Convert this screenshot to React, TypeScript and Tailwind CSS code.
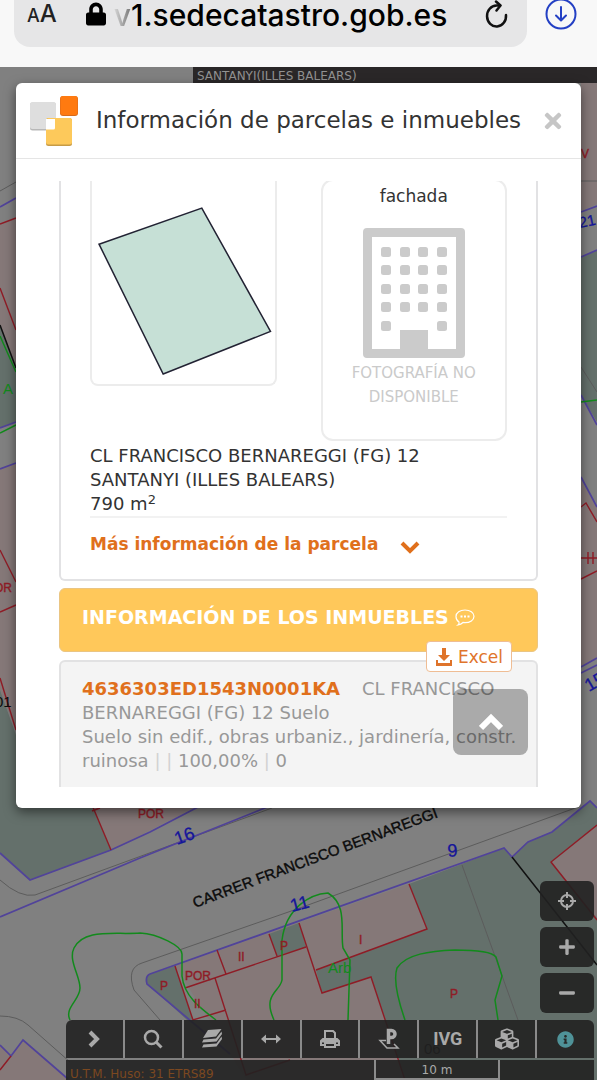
import type { ReactNode } from 'react';
import { FaCubes, FaInfoCircle, FaLock, FaMinus, FaPlus, FaTimes } from 'react-icons/fa';

const PINK = '#857878';
const GREEN = '#64706b';
const RED = '#8f1c26';
const VIOLET = '#51439a';
const LIME = '#128a1c';
const GREY = '#5c5c5c';

export default function App() {
  return (
    <div className="flex min-h-screen flex-col overflow-hidden bg-[#808080] font-['DejaVu_Sans','Verdana',sans-serif] text-[#333]">
      <BrowserBar />

      <main className="relative flex flex-1 flex-col overflow-hidden">
        <CadastralMap />
        <div className="relative ml-[193px] h-4 bg-[#2a2728] px-1 text-xs leading-[18px] text-[#929292]">
          SANTANYI(ILLES BALEARS)
        </div>
        <ParcelDialog />
        <MapControls />
      </main>
    </div>
  );
}

function BrowserBar() {
  return (
    <header className="flex h-[67px] items-start bg-[#f8f8f8] pr-5 pl-[14px] font-['Inter','Liberation_Sans',sans-serif] text-black">
      <div className="flex h-[47px] flex-1 items-start rounded-b-2xl bg-[#e6e6e7] pr-[18px] pl-[13px]">
        <button aria-label="Tamaño del texto" className="flex h-7 items-baseline font-medium text-[#222]">
          <span className="text-[18px] leading-7">A</span>
          <span className="text-[24px] leading-7">A</span>
        </button>
        <FaLock className="mt-px ml-[29px] h-[26px] w-5" />
        <span className="ml-2 flex-1 text-[30px] leading-[30px] font-medium whitespace-nowrap">
          <span className="bg-linear-to-r from-[#d8d8d8] to-[#777] bg-clip-text text-transparent">v</span>1.sedecatastro.gob.es
        </span>
        <button aria-label="Recargar">
          <svg viewBox="0 0 24 30" className="h-[30px] w-6" fill="none" stroke="#111" strokeWidth="2.500" strokeLinecap="round" strokeLinejoin="round">
            <path d="M21 15a9.500 10.500 0 1 1-9.500-9.500H15" />
            <path d="M11 1.500 15.500 5.500 11.500 10.500" />
          </svg>
        </button>
      </div>
      <button aria-label="Descargas" className="ml-[18px]">
        <svg viewBox="0 0 32 30" className="h-[30px] w-8" fill="none" stroke="#2440c4" strokeWidth="2" strokeLinecap="round" strokeLinejoin="round">
          <circle cx="16" cy="14" r="14.500" />
          <path d="M16 7v13M11 15.500l5 5 5-5" />
        </svg>
      </button>
    </header>
  );
}

function ParcelDialog() {
  return (
    <section role="dialog" aria-labelledby="dialog-title" className="relative mx-4 rounded-md bg-white pb-[21px] shadow-[0_4px_12px_rgba(0,0,0,0.5)]">
      <div className="flex h-[76px] items-center border-b border-[#e5e5e5] pr-4 pl-[14px]">
        <Logo />
        <h1 id="dialog-title" className="ml-4 flex-1 text-[23px] whitespace-nowrap">
          Información de parcelas e inmuebles
        </h1>
        <button aria-label="Cerrar" className="text-[#c6c6c6]">
          <FaTimes className="size-6" />
        </button>
      </div>

      {/* Scrolled content */}
      <div className="mx-[43px] mt-[22px] overflow-hidden text-lg leading-6">
        <div className="rounded-b-md border-2 border-t-0 border-[#e2e2e4] px-[29px] pb-[23px]">
          <div className="grid grid-cols-2 items-start gap-11">
            <div className="rounded-b-lg border-2 border-t-0 border-[#ececec]">
              <svg viewBox="0 0 182 202" className="w-full">
                <path d="M7 63 109.500 27 178 150 71 192.500Z" fill="#c6e0d6" stroke="#223" strokeWidth="1.500" />
              </svg>
            </div>
            <div className="-mt-[2px] flex flex-col items-center rounded-xl border-2 border-[#ececec] pb-[30px] text-center">
              <p className="mt-[3px] text-[17px] leading-6">fachada</p>
              <BuildingPicture />
              <p className="mt-[3px] text-[15px] leading-6 text-[#cacaca]">
                FOTOGRAFÍA NO
                <br />
                DISPONIBLE
              </p>
            </div>
          </div>

          <p className="mt-[3px] border-b-2 border-[#f2f2f2]">
            CL FRANCISCO BERNAREGGI (FG) 12
            <br />
            SANTANYI (ILLES BALEARS)
            <br />
            790 m<sup className="text-[13px]">2</sup>
          </p>
          <button className="mt-[14px] flex items-center gap-[22px] text-[17px] font-bold text-[#e0701c]">
            Más información de la parcela
            <svg viewBox="0 0 20 14" className="mt-2 h-[14px] w-5" fill="none" stroke="currentColor" strokeWidth="4">
              <path d="m2 2 8 8 8-8" />
            </svg>
          </button>
        </div>

        <div className="relative mt-[7px] h-16 rounded-md border border-[#eac583] bg-[#ffc85a] px-[22px] pt-4">
          <h2 className="flex items-center gap-[6px] text-[19px] font-bold whitespace-nowrap text-white">
            INFORMACIÓN DE LOS INMUEBLES
            <svg viewBox="0 0 20 18" className="h-[18px] w-5" fill="none" stroke="white" strokeWidth="1.200">
              <path d="M4 14C1.500 12.500 1 10.500 1 8.500 1 4.500 5 2 10 2s9 2.500 9 6.300-4 6.400-9 6.400l-2-.2C6.500 16 5 16.700 3 17c1-.8 1.300-1.800 1-3Z" />
              <path d="M5.500 8.500h2M9 8.500h2M12.500 8.500h2" strokeWidth="2" />
            </svg>
          </h2>
          <button className="absolute top-[52px] right-[25px] z-10 flex h-[31px] items-center gap-[5px] rounded border border-[#efbd94] bg-white px-2 text-[17px] text-[#df742b]">
            <svg viewBox="0 0 18 20" className="h-5 w-[18px]" fill="currentColor">
              <path d="M7 1h4v7h4l-6 6-6-6h4ZM1 13h2v3h12v-3h2v6H1Z" />
            </svg>
            Excel
          </button>
        </div>

        <div className="mt-2 rounded-t-md border-2 border-b-0 border-[#e2e2e3] bg-[#f4f4f4] px-[21px] pt-[15px] pb-[14px] text-[#989898]">
          <p>
            <a href="#inmueble" className="mr-[22px] font-bold text-[#e0701c]">4636303ED1543N0001KA</a>
            CL FRANCISCO BERNAREGGI (FG) 12 Suelo
            <br />
            <span className="whitespace-nowrap">Suelo sin edif., obras urbaniz., jardinería, constr.</span>
            <br />
            ruinosa <i className="text-[#d2d2d2] not-italic">| |</i> 100,00% <i className="text-[#d2d2d2] not-italic">|</i> 0
          </p>
        </div>
      </div>

      <button aria-label="Volver arriba" className="absolute right-[53px] bottom-[53px] flex h-[66px] w-[75px] items-center justify-center rounded-lg bg-black/30 text-white">
        <svg viewBox="0 0 24 18" className="h-[18px] w-6" fill="none" stroke="currentColor" strokeWidth="6">
          <path d="M2 15 12 5l10 10" />
        </svg>
      </button>
    </section>
  );
}

function Logo() {
  return (
    <svg viewBox="0 0 50 52" className="h-[52px] w-[50px]">
      <rect x="0" y="7.500" width="26" height="28" rx="2.500" fill="#b8b8b8" />
      <rect x="0" y="7" width="26" height="27" rx="2.500" fill="#dedede" />
      <rect x="30" y="1" width="18" height="20" rx="3" fill="#d66b1c" />
      <rect x="30.500" y="1" width="17" height="19" rx="2.500" fill="#ff7a10" />
      <rect x="16" y="23" width="26" height="28" rx="2.500" fill="#c79b45" />
      <rect x="16" y="23" width="26" height="26.500" rx="2.500" fill="#fdc95b" />
      <path d="M16 24h9v9a1.500 1.500 0 0 1-1.500 1.500H16Z" fill="#fff" />
    </svg>
  );
}

function BuildingPicture() {
  const columns = [18, 37, 55, 74];
  const rows = [19, 37, 56, 74, 93];
  return (
    <svg viewBox="0 0 102 130" className="mt-5 h-[130px] w-[102px]" fill="#cbcbcb">
      <path fillRule="evenodd" d="M4 0h94a4 4 0 0 1 4 4v122a4 4 0 0 1-4 4H4a4 4 0 0 1-4-4V4a4 4 0 0 1 4-4ZM9 9v112h28v-19h28v19h28V9Z" />
      {rows.map((y, row) =>
        columns
          .filter((_, col) => row < 4 || col === 0 || col === 3)
          .map(x => <rect key={`${x}-${y}`} x={x} y={y} width="10" height="10" rx="2.500" />),
      )}
    </svg>
  );
}

function ToolButton({ label, children }: { label: string; children: ReactNode }) {
  return (
    <button aria-label={label} className="flex flex-1 items-center justify-center border-r-2 border-[#8a8a8a] last:border-r-0">
      {children}
    </button>
  );
}

function ZoomButton({ label, children }: { label: string; children: ReactNode }) {
  return (
    <button aria-label={label} className="flex h-10 w-[54px] items-center justify-center rounded-md bg-[#212121]/90">
      {children}
    </button>
  );
}

function MapControls() {
  return (
    <div className="relative mt-auto mr-[3px] ml-[66px] flex flex-col text-[#a9a9a9]">
      <div className="mb-[7px] flex flex-col items-end gap-[6px]">
        <ZoomButton label="Mi posición">
          <svg viewBox="0 0 18 18" className="size-[18px]" fill="none" stroke="currentColor" strokeWidth="2">
            <circle cx="9" cy="9" r="6" />
            <path d="M9 0v6M9 12v6M0 9h6M12 9h6" />
          </svg>
        </ZoomButton>
        <ZoomButton label="Acercar"><FaPlus className="size-[18px]" /></ZoomButton>
        <ZoomButton label="Alejar"><FaMinus className="size-[18px]" /></ZoomButton>
      </div>

      <div className="flex h-[38px] rounded-t-md bg-[#212121]/90">
        <ToolButton label="Desplegar">
          <svg viewBox="0 0 12 18" className="h-[18px] w-3" fill="none" stroke="currentColor" strokeWidth="4">
            <path d="m2 2 7 7-7 7" />
          </svg>
        </ToolButton>
        <ToolButton label="Buscar">
          <svg viewBox="0 0 20 20" className="size-5" fill="none" stroke="currentColor">
            <circle cx="8.500" cy="8.500" r="6.500" strokeWidth="2.500" />
            <path d="m13 13 5.500 5.500" strokeWidth="3" />
          </svg>
        </ToolButton>
        <ToolButton label="Capas">
          <svg viewBox="0 0 22 22" className="size-[22px]" fill="currentColor">
            <path d="M7 2 20.500 1 15 8.500 2 10Z" />
            <path d="m2.500 11.500 12.500-1 5.500-7 .5 2.500-5.500 7.500L1 14.500Z" />
            <path d="m2.500 16.500 13-1 5-7 .5 2.500-5.500 7.500L1 19.500Z" />
          </svg>
        </ToolButton>
        <ToolButton label="Medir">
          <svg viewBox="0 0 20 10" className="h-[10px] w-5" fill="currentColor">
            <path d="M0 5 5 .5V4h10V.5L20 5l-5 4.500V6H5v3.500Z" />
          </svg>
        </ToolButton>
        <ToolButton label="Imprimir">
          <svg viewBox="0 0 20 18" className="h-[18px] w-5" fill="none" stroke="currentColor" strokeWidth="2">
            <path d="M5 9V1h8l2 2v6" />
            <path d="M4 15H1v-4l2-2h14l2 2v4h-3" />
            <path d="M2 11h16" strokeWidth="3" />
            <path d="M5 13h10v4H5Z" />
          </svg>
        </ToolButton>
        <ToolButton label="Parcela">
          <svg viewBox="0 0 22 22" className="size-[22px]" fill="none" stroke="currentColor">
            <path d="M10.500 16V2.500h3a3.500 3.500 0 0 1 0 7h-3" strokeWidth="3.500" />
            <path d="M8 12.500H2l7 7.500h11l-4-4" strokeWidth="1.500" />
          </svg>
        </ToolButton>
        <ToolButton label="Informe de validación gráfica">
          <span className="font-['Liberation_Sans_Narrow','Roboto',sans-serif] text-lg leading-5 font-bold">IVG</span>
        </ToolButton>
        <ToolButton label="Bloques"><FaCubes className="size-6" /></ToolButton>
        <ToolButton label="Información"><FaInfoCircle className="size-[17px] text-[#4f9298]" /></ToolButton>
      </div>

      <div className="mt-[2px] flex h-5 bg-[#212121]/90 text-xs leading-5">
        <span className="flex-1 pt-1 pl-1 whitespace-nowrap text-[#7b4820]">U.T.M. Huso: 31 ETRS89</span>
        <span className="mr-[94px] w-[126px] border-2 border-t-0 border-[#8c8c8c] text-center">10 m</span>
      </div>
    </div>
  );
}

function CadastralMap() {
  return (
    <svg viewBox="0 67 597 1013" preserveAspectRatio="xMidYMin slice" className="absolute inset-0 h-full w-full" fill="none" fontFamily="Liberation Sans, Arial, sans-serif">
      {/* Parcels */}
      <g fill={PINK}>
        <path d="M0 224 16 218V368L0 325ZM0 469 16 463V730L0 690ZM581 83H597V204L581 211ZM581 479 597 507V658L581 666Z" />
        <path d="M92 805H200L111 850ZM175 966 409 884 427 929 316 970 322 993 371 977 405 1080H247ZM0 1045 11 1056 23 1040 70 1080H0Z" />
      </g>
      <g fill={GREEN}>
        <path d="M0 325 16 368V422L0 428ZM0 690 16 735V805H92L111 850 30 880 0 853ZM581 257 597 250V422L581 395Z" />
        <path d="M146 982Q145 976 150 974L175 966 193 1020H187ZM269 934 299 923 306 947 277 956Z" />
        <path d="M409 884 504 848 512 857 528 842 552 832 590 801 597 808V1080H405L371 977 322 993 316 970 427 929Z" />
      </g>
      <path d="M551 862 597 825V918Z" fill={PINK} />

      {/* Street edges */}
      <g stroke={GREY} strokeWidth="1">
        <path d="M0 191 16 182M581 181H597M581 367 597 392" />
        <path d="M0 880Q20 898 35 895L272 808M160 1020 134 990Q126 968 142 963L297 909 578 807" />
        <path d="M462 865 518 1020M0 1016Q18 1016 28 1025L70 1062" />
      </g>
      <g stroke={VIOLET} strokeWidth="1.700">
        <path d="M0 207 16 198M0 428 16 422M0 469 16 463M581 212 597 206M581 257 597 250M581 395 597 425M581 477 597 507M581 667 597 658M581 673 597 665" />
        <path d="M0 853 30 880 111 850 150 832 200 806M0 917 140 858 270 806" />
        <path d="M230 1054 147 984Q145 976 150 974L504 848 512 857 528 842 552 832 590 801 597 808M0 1045 11 1056 23 1040 68 1079" />
      </g>
      <g stroke={RED} strokeWidth="1.400">
        <path d="M0 224 16 218M0 288 16 330M0 550 16 582M0 612 16 605M0 678 16 730M581 507 586 503 597 522M581 579 597 571M581 558H597M588 552V564M593 552V564" />
        <path d="M92 805 111 850M92 811 100 808M175 966 193 1020 226 1010M185 988 306 947M217 950 226 974M269 934 277 956M215 978 246 1075 290 1060" />
        <path d="M299 923 322 993 371 977 405 1080M409 884 427 929 316 970M597 825 551 862 597 920M0 1070 11 1056" />
      </g>
      <path d="M0 325 16 368M512 857 597 965" stroke="#111" strokeWidth="1.500" />
      <g stroke={LIME} strokeWidth="1.500">
        <path d="M0 336 16 372M0 433 16 425M581 402 597 400M70 1020C64 1008 80 1000 80 988S68 960 74 948C84 928 115 935 140 933 158 934 182 946 182 954V976C184 996 200 1008 216 1020" />
        <path d="M274 1020C262 994 280 992 282 980V940C286 908 310 894 328 893 348 905 340 930 343 948L350 960 348 1020" />
        <path d="M405 1020C398 1000 393 980 397 968 406 954 430 951 455 950 480 950 492 952 496 957L502 976 495 1000 498 1020" />
      </g>

      {/* Labels */}
      <text transform="translate(195 908) rotate(-20.500)" fontSize="15" fill="#0c0c0c" stroke="#0c0c0c" strokeWidth="0.400">CARRER FRANCISCO BERNAREGGI</text>
      <g fill="#15159a" stroke="#15159a" strokeWidth="0.300" fontSize="18">
        <text transform="translate(177 845) rotate(-20)">16</text>
        <text transform="translate(292 912) rotate(-15)">11</text>
        <text transform="translate(448 857) rotate(-5)">9</text>
        <text transform="translate(580 228) rotate(-12)" fontSize="15">21</text>
        <text transform="translate(589 692) rotate(-30)">15</text>
      </g>
      <g fill={RED} stroke={RED} strokeWidth="0.400" fontSize="12">
        <text x="138" y="818">POR</text>
        <text x="185" y="980">POR</text>
        <text x="160" y="990">P</text>
        <text x="238" y="961">II</text>
        <text x="194" y="1008">II</text>
        <text x="280" y="950">P</text>
        <text x="359" y="944">I</text>
        <text x="450" y="998">P</text>
        <text x="-6" y="592">OR</text>
        <text x="581" y="158">V</text>
      </g>
      <g fill={LIME}>
        <text x="328" y="973" fontSize="15">Arb</text>
        <text x="3" y="394" fontSize="15">A</text>
      </g>
      <g fill="#0c0c0c" fontSize="15">
        <text x="-5" y="707">01</text>
        <text x="424" y="1054">06</text>
      </g>
    </svg>
  );
}
